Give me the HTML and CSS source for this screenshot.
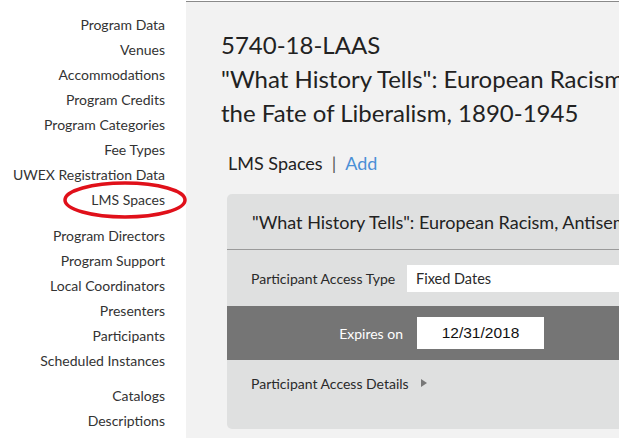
FILE: index.html
```html
<!DOCTYPE html>
<html>
<head>
<meta charset="utf-8">
<link rel="stylesheet" href="styles.css">
</head>
<body>
<div class="page">
  <aside class="sidenav">
    <ul class="nav-group">
      <li>Program Data</li>
      <li>Venues</li>
      <li>Accommodations</li>
      <li>Program Credits</li>
      <li>Program Categories</li>
      <li>Fee Types</li>
      <li>UWEX Registration Data</li>
      <li class="highlight">LMS Spaces
        <svg class="circle" width="126" height="40" viewBox="0 0 126 40"><ellipse cx="63" cy="20" rx="60" ry="17" fill="none" stroke="#e0101a" stroke-width="3.5"/></svg>
      </li>
    </ul>
    <ul class="nav-group second">
      <li>Program Directors</li>
      <li>Program Support</li>
      <li>Local Coordinators</li>
      <li>Presenters</li>
      <li>Participants</li>
      <li>Scheduled Instances</li>
    </ul>
    <ul class="nav-group">
      <li>Catalogs</li>
      <li>Descriptions</li>
    </ul>
  </aside>
  <main class="content">
    <h1 class="title">5740-18-LAAS<br>"What History Tells": European Racism, Antisemitism, and<br>the Fate of Liberalism, 1890-1945</h1>
    <div class="section-head">
      <span>LMS Spaces</span><span class="sep">|</span><a class="add">Add</a>
    </div>
    <div class="card">
      <div class="card-head">"What History Tells": European Racism, Antisemitism, and the Fate of Liberalism, 1890-1945</div>
      <div class="row">
        <span class="label">Participant Access Type</span>
        <div class="select">Fixed Dates</div>
      </div>
      <div class="band">
        <span class="band-label">Expires on</span>
        <div class="date">12/31/2018</div>
      </div>
      <div class="details">
        <span>Participant Access Details</span>
        <span class="tri"></span>
      </div>
    </div>
  </main>
</div>
</body>
</html>
```
FILE: styles.css
```css
html, body {
  margin: 0;
  padding: 0;
  height: 100%;
  overflow: hidden;
  background: #fff;
  font-family: Lato, "Open Sans", sans-serif;
  color: #2a2a2a;
}
.page {
  display: flex;
  height: 438px;
  width: 619px;
  overflow: hidden;
}
.sidenav {
  width: 186px;
  flex: none;
  padding-top: 12px;
  box-sizing: border-box;
}
.nav-group {
  list-style: none;
  margin: 0 0 11px 0;
  padding: 0 21px 0 0;
  text-align: right;
  font-size: 14px;
  line-height: 25px;
  color: #333;
}
.nav-group.second {
  margin-bottom: 10px;
}
.nav-group li {
  white-space: nowrap;
}
.highlight {
  position: relative;
}
.circle {
  position: absolute;
  right: -23px;
  top: -7px;
}
.content {
  flex: 1;
  min-width: 0;
  background: #f2f2f2;
  border-top: 1px solid #8a8a8a;
  margin-top: 1px;
  padding-left: 35px;
  overflow: hidden;
}
.title {
  margin: 26px 0 0 0;
  font-weight: 400;
  font-size: 24px;
  line-height: 34px;
  white-space: nowrap;
  color: #222;
}
.section-head {
  margin: 21px 0 0 7px;
  font-size: 18px;
  line-height: 24px;
  display: flex;
  color: #222;
}
.sep {
  margin: 0 9px 0 9px;
  color: #555;
}
.add {
  color: #4a8fd6;
}
.card {
  margin: 19px 0 0 6px;
  width: 520px;
  background: #dfe0e0;
  border-radius: 5px;
  height: 235px;
}
.card-head {
  height: 55px;
  display: flex;
  align-items: center;
  padding-left: 25px;
  font-size: 18px;
  white-space: nowrap;
  border-bottom: 1px solid #9a9a9a;
  color: #222;
}
.row {
  height: 56px;
  display: flex;
  align-items: center;
  padding-left: 24px;
  font-size: 14px;
}
.label {
  width: 156px;
  flex: none;
}
.select {
  background: #fff;
  height: 27px;
  flex: 1;
  display: flex;
  align-items: center;
  padding-left: 9px;
  font-size: 14.5px;
}
.band {
  height: 54px;
  background: #757575;
  display: flex;
  align-items: center;
  padding-left: 25px;
}
.band-label {
  width: 151px;
  flex: none;
  text-align: right;
  color: #fff;
  font-size: 14px;
}
.date {
  margin-left: 14px;
  width: 127px;
  height: 32px;
  background: #fff;
  display: flex;
  align-items: center;
  justify-content: center;
  font-family: "Liberation Sans", Arial, sans-serif;
  font-size: 15.5px;
  color: #111;
}
.details {
  display: flex;
  align-items: center;
  padding-left: 24px;
  height: 46px;
  font-size: 14px;
}
.tri {
  width: 0;
  height: 0;
  border-left: 6px solid #777;
  border-top: 4.5px solid transparent;
  border-bottom: 4.5px solid transparent;
  margin-left: 12px;
}
```
